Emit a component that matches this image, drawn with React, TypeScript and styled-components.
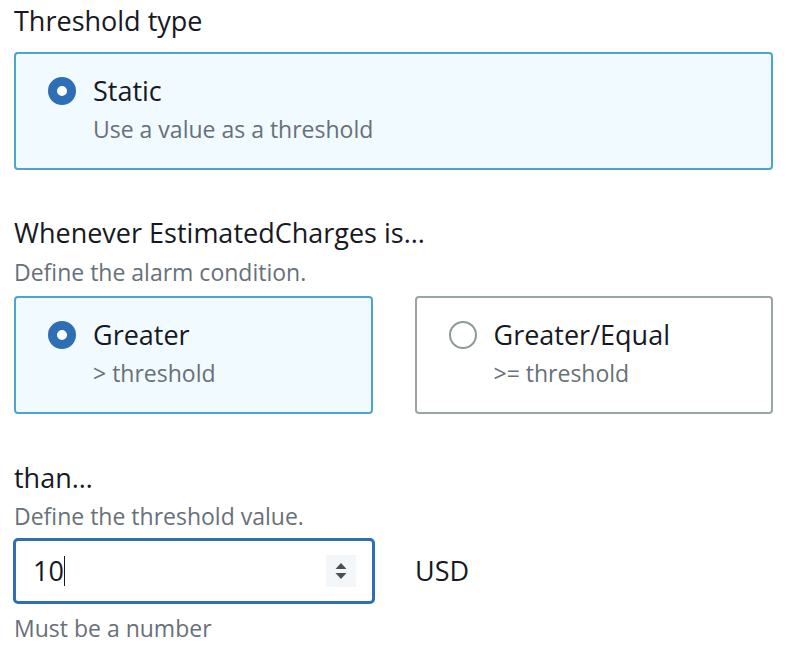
import React from "react";
import styled, { createGlobalStyle } from "styled-components";

const GlobalStyle = createGlobalStyle`
  html, body {
    margin: 0;
    padding: 0;
    background: #ffffff;
  }
  body {
    font-family: "Open Sans", "Noto Sans", Arial, sans-serif;
    color: #16191f;
  }
`;

const Page = styled.div`
  width: 787px;
  box-sizing: border-box;
  padding: 6px 14px 0 14px;
`;

const Section = styled.section<{ $top?: number }>`
  margin-top: ${(p) => p.$top ?? 0}px;
`;

const Label = styled.div`
  font-size: 27px;
  line-height: 30px;
  color: #16191f;
`;

const Hint = styled.div<{ $gap?: number }>`
  margin-top: ${(p) => p.$gap ?? 0}px;
  font-size: 23px;
  line-height: 28px;
  color: #687078;
`;

const TileRow = styled.div`
  display: grid;
  grid-template-columns: 1fr 1fr;
  column-gap: 42px;
  margin-top: 10px;
`;

const Tile = styled.div<{ $selected?: boolean; $top?: number }>`
  margin-top: ${(p) => p.$top ?? 0}px;
  display: flex;
  align-items: flex-start;
  gap: 17px;
  padding: 22px 30px 25px 32px;
  border: 2px solid ${(p) => (p.$selected ? "#4ea5cc" : "#9aa5a6")};
  border-radius: 4px;
  background: ${(p) => (p.$selected ? "#f1faff" : "#ffffff")};
`;

const Radio = styled.span<{ $checked?: boolean }>`
  flex: none;
  box-sizing: border-box;
  width: 28px;
  height: 28px;
  margin-top: 1px;
  border-radius: 50%;
  background: #ffffff;
  border: ${(p) => (p.$checked ? "9px solid #2e6eb5" : "2px solid #8f999a")};
`;

const TileText = styled.div`
  display: flex;
  flex-direction: column;
  gap: 9px;
`;

const TileTitle = styled.div`
  font-size: 27px;
  line-height: 30px;
  color: #16191f;
`;

const TileDesc = styled.div`
  font-size: 23px;
  line-height: 28px;
  color: #687078;
`;

const InputRow = styled.div`
  display: flex;
  align-items: center;
  gap: 40px;
  margin-top: 8px;
`;

const NumberBox = styled.div`
  box-sizing: border-box;
  width: 362px;
  height: 66px;
  margin-left: -1px;
  display: flex;
  align-items: center;
  padding: 0 16px 0 17px;
  border: 3px solid #2e6eb5;
  border-radius: 5px;
  background: #ffffff;
`;

const Value = styled.span`
  font-size: 27px;
  line-height: 30px;
  color: #16191f;
`;

const Caret = styled.span`
  display: inline-block;
  width: 1.5px;
  height: 30px;
  background: #16191f;
`;

const Spinner = styled.div`
  margin-left: auto;
  width: 30px;
  height: 32px;
  display: flex;
  align-items: center;
  justify-content: center;
  background: #f3f7fa;
`;

const Unit = styled.span`
  font-size: 27px;
  line-height: 30px;
  color: #16191f;
`;

type Option = { title: string; desc: string; selected?: boolean };

const OptionTile: React.FC<Option & { top?: number }> = ({ title, desc, selected, top }) => (
  <Tile $selected={selected} $top={top}>
    <Radio $checked={selected} />
    <TileText>
      <TileTitle>{title}</TileTitle>
      <TileDesc>{desc}</TileDesc>
    </TileText>
  </Tile>
);

export default function App() {
  const conditions: Option[] = [
    { title: "Greater", desc: "> threshold", selected: true },
    { title: "Greater/Equal", desc: ">= threshold" },
  ];

  return (
    <Page>
      <GlobalStyle />
      <Section>
        <Label>Threshold type</Label>
        <OptionTile top={16} title="Static" desc="Use a value as a threshold" selected />
      </Section>

      <Section $top={48}>
        <Label>Whenever EstimatedCharges is...</Label>
        <Hint $gap={10}>Define the alarm condition.</Hint>
        <TileRow>
          {conditions.map((c) => (
            <OptionTile key={c.title} {...c} />
          ))}
        </TileRow>
      </Section>

      <Section $top={49}>
        <Label>than…</Label>
        <Hint $gap={9}>Define the threshold value.</Hint>
        <InputRow>
          <NumberBox>
            <Value>10</Value>
            <Caret />
            <Spinner>
              <svg width="12" height="22" viewBox="0 0 12 22">
                <path d="M6 3 L11.5 9 H0.5 Z" fill="#4a4f55" />
                <path d="M0.5 13 H11.5 L6 19 Z" fill="#4a4f55" />
              </svg>
            </Spinner>
          </NumberBox>
          <Unit>USD</Unit>
        </InputRow>
        <Hint $gap={10}>Must be a number</Hint>
      </Section>
    </Page>
  );
}
